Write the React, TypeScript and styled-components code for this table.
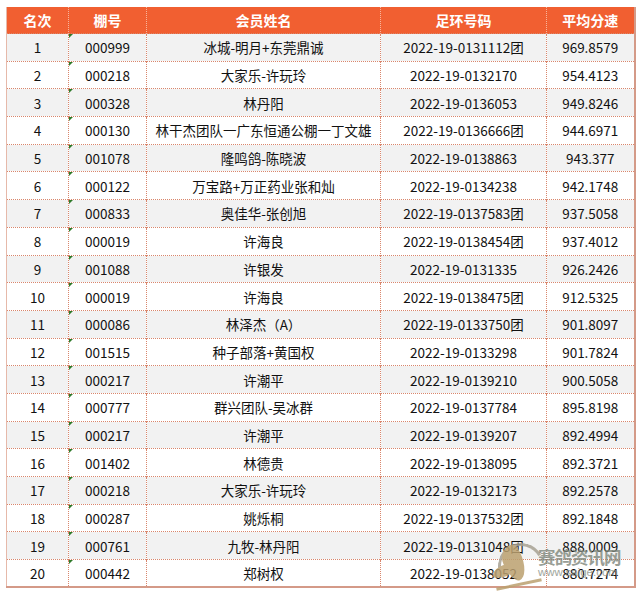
import React from "react";
import styled, { createGlobalStyle } from "styled-components";

const Global = createGlobalStyle`
  html, body { margin: 0; padding: 0; background: #fff; }
  body { font-family: "Noto Sans CJK SC", "Noto Sans", sans-serif; }
`;

const Page = styled.div`
  position: relative;
  width: 640px;
  height: 592px;
  padding: 7px 6px 0 6px;
  box-sizing: border-box;
  overflow: hidden;
`;

const Table = styled.table`
  width: 628px;
  table-layout: fixed;
  border-collapse: collapse;
  border-left: 1px solid #e6b9aa;
  border-right: 2px solid #d49a88;
  border-bottom: 2px solid #d49a88;
`;

const HeadCell = styled.th`
  height: 26px;
  padding: 0;
  background: #f15f31;
  color: #fff;
  font-size: 14px;
  font-weight: 700;
  text-align: center;
  border-left: 1px dotted #f7b59c;
  &:first-child { border-left: none; }
`;

const Row = styled.tr<{ $odd: boolean }>`
  height: 27.7px;
  background: ${(p) => (p.$odd ? "#f2f2f2" : "#ffffff")};
  border-top: 1px dotted #d9866c;
`;

const Cell = styled.td`
  position: relative;
  padding: 0;
  text-align: center;
  font-size: 13.5px;
  color: #111;
  white-space: nowrap;
  border-left: 1px dotted #d9866c;
  &:first-child { border-left: none; }
`;

const Marker = styled.span`
  position: absolute;
  left: 0;
  top: 0;
  width: 0;
  height: 0;
  border-top: 4px solid #2f7a2a;
  border-right: 4px solid transparent;
`;

const Watermark = styled.div`
  position: absolute;
  left: 490px;
  top: 538px;
  z-index: 5;
  width: 140px;
  height: 54px;
  display: flex;
  align-items: center;
  pointer-events: none;
`;

const Logo = styled.div`
  position: relative;
  flex: none;
  width: 56px;
  height: 52px;
  margin-right: -8px;
  opacity: 0.85;
`;

const Arc = styled.div`
  position: absolute;
  left: 8px;
  top: 4px;
  width: 40px;
  height: 40px;
  border-radius: 50%;
  border: 3px solid transparent;
  border-top-color: #a8a294;
  border-left-color: #a8a294;
  transform: rotate(15deg);
`;

const Bird = styled.div`
  position: absolute;
  left: 14px;
  top: 6px;
  width: 20px;
  height: 36px;
  background: #bba06f;
  border-radius: 70% 30% 60% 40% / 40% 30% 70% 60%;
  transform: rotate(-25deg);
`;

const Wing = styled.div`
  position: absolute;
  left: 2px;
  top: 26px;
  width: 22px;
  height: 12px;
  background: #bba06f;
  border-radius: 80% 20% 50% 50% / 70% 30% 70% 30%;
  transform: rotate(-15deg);
`;

const Base = styled.div`
  position: absolute;
  left: 6px;
  top: 44px;
  width: 46px;
  height: 3px;
  background: #bba06f;
  transform: rotate(-12deg);
`;

const WmText = styled.div`
  display: flex;
  flex-direction: column;
  align-items: flex-start;
  line-height: 1;
  margin-top: -4px;
  opacity: 0.8;
`;

const WmTitle = styled.span`
  font-size: 17.5px;
  font-weight: 700;
  color: #7f877c;
  letter-spacing: -1px;
`;

const WmUrl = styled.span`
  margin-top: 2px;
  font-family: "Liberation Sans", sans-serif;
  font-size: 11.5px;
  color: #8a9086;
`;

type R = [string, string, string, string, string];

const rows: R[] = [
  ["1", "000999", "冰城-明月+东莞鼎诚", "2022-19-0131112团", "969.8579"],
  ["2", "000218", "大家乐-许玩玲", "2022-19-0132170", "954.4123"],
  ["3", "000328", "林丹阳", "2022-19-0136053", "949.8246"],
  ["4", "000130", "林干杰团队一广东恒通公棚一丁文雄", "2022-19-0136666团", "944.6971"],
  ["5", "001078", "隆鸣鸽-陈晓波", "2022-19-0138863", "943.377"],
  ["6", "000122", "万宝路+万正药业张和灿", "2022-19-0134238", "942.1748"],
  ["7", "000833", "奥佳华-张创旭", "2022-19-0137583团", "937.5058"],
  ["8", "000019", "许海良", "2022-19-0138454团", "937.4012"],
  ["9", "001088", "许银发", "2022-19-0131335", "926.2426"],
  ["10", "000019", "许海良", "2022-19-0138475团", "912.5325"],
  ["11", "000086", "林泽杰（A）", "2022-19-0133750团", "901.8097"],
  ["12", "001515", "种子部落+黄国权", "2022-19-0133298", "901.7824"],
  ["13", "000217", "许潮平", "2022-19-0139210", "900.5058"],
  ["14", "000777", "群兴团队-吴冰群", "2022-19-0137784", "895.8198"],
  ["15", "000217", "许潮平", "2022-19-0139207", "892.4994"],
  ["16", "001402", "林德贵", "2022-19-0138095", "892.3721"],
  ["17", "000218", "大家乐-许玩玲", "2022-19-0132173", "892.2578"],
  ["18", "000287", "姚烁桐", "2022-19-0137532团", "892.1848"],
  ["19", "000761", "九牧-林丹阳", "2022-19-0131048团", "888.0009"],
  ["20", "000442", "郑树权", "2022-19-0138052", "880.7274"],
];

const widths = [62, 78, 234, 166, 88];
const heads = ["名次", "棚号", "会员姓名", "足环号码", "平均分速"];

export default function App() {
  return (
    <>
      <Global />
      <Page>
        <Table>
          <colgroup>
            {widths.map((w, i) => (
              <col key={i} style={{ width: w }} />
            ))}
          </colgroup>
          <thead>
            <tr>
              {heads.map((h) => (
                <HeadCell key={h}>{h}</HeadCell>
              ))}
            </tr>
          </thead>
          <tbody>
            {rows.map((r, i) => (
              <Row key={i} $odd={i % 2 === 0}>
                <Cell>{r[0]}</Cell>
                <Cell>
                  <Marker />
                  {r[1]}
                </Cell>
                <Cell>{r[2]}</Cell>
                <Cell>{r[3]}</Cell>
                <Cell>{r[4]}</Cell>
              </Row>
            ))}
          </tbody>
        </Table>
        <Watermark>
          <Logo>
            <Arc />
            <Bird />
            <Wing />
            <Base />
          </Logo>
          <WmText>
            <WmTitle>赛鸽资讯网</WmTitle>
            <WmUrl>www.saige.com</WmUrl>
          </WmText>
        </Watermark>
      </Page>
    </>
  );
}
